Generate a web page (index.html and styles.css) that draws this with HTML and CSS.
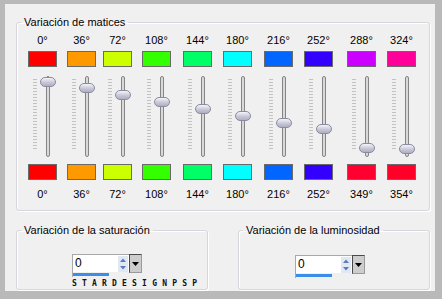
FILE: index.html
```html
<!DOCTYPE html>
<html lang="es">
<head>
  <meta charset="UTF-8" />
  <title>Variación de matices</title>
  <link rel="stylesheet" href="styles.css">
</head>
<body>
  <div class="panel">
    <fieldset class="group hue-group">
      <legend>Variación de matices</legend>
      <div class="hue-grid">
        <div class="hue-col">
          <div class="deg">0°</div>
          <div class="swatch" style="background:#ff0000"></div>
          <div class="slider"><div class="ticks"></div><div class="track"></div><div class="thumb" style="top:10px"></div></div>
          <div class="swatch" style="background:#ff0000"></div>
          <div class="deg deg-bottom">0°</div>
        </div>
        <div class="hue-col">
          <div class="deg">36°</div>
          <div class="swatch" style="background:#ff9900"></div>
          <div class="slider"><div class="ticks"></div><div class="track"></div><div class="thumb" style="top:16px"></div></div>
          <div class="swatch" style="background:#ff9900"></div>
          <div class="deg deg-bottom">36°</div>
        </div>
        <div class="hue-col">
          <div class="deg">72°</div>
          <div class="swatch" style="background:#ccff00"></div>
          <div class="slider"><div class="ticks"></div><div class="track"></div><div class="thumb" style="top:23px"></div></div>
          <div class="swatch" style="background:#ccff00"></div>
          <div class="deg deg-bottom">72°</div>
        </div>
        <div class="hue-col">
          <div class="deg">108°</div>
          <div class="swatch" style="background:#33ff00"></div>
          <div class="slider"><div class="ticks"></div><div class="track"></div><div class="thumb" style="top:30px"></div></div>
          <div class="swatch" style="background:#33ff00"></div>
          <div class="deg deg-bottom">108°</div>
        </div>
        <div class="hue-col">
          <div class="deg">144°</div>
          <div class="swatch" style="background:#00ff66"></div>
          <div class="slider"><div class="ticks"></div><div class="track"></div><div class="thumb" style="top:37px"></div></div>
          <div class="swatch" style="background:#00ff66"></div>
          <div class="deg deg-bottom">144°</div>
        </div>
        <div class="hue-col">
          <div class="deg">180°</div>
          <div class="swatch" style="background:#00ffff"></div>
          <div class="slider"><div class="ticks"></div><div class="track"></div><div class="thumb" style="top:44px"></div></div>
          <div class="swatch" style="background:#00ffff"></div>
          <div class="deg deg-bottom">180°</div>
        </div>
        <div class="hue-col">
          <div class="deg">216°</div>
          <div class="swatch" style="background:#0066ff"></div>
          <div class="slider"><div class="ticks"></div><div class="track"></div><div class="thumb" style="top:51px"></div></div>
          <div class="swatch" style="background:#0066ff"></div>
          <div class="deg deg-bottom">216°</div>
        </div>
        <div class="hue-col">
          <div class="deg">252°</div>
          <div class="swatch" style="background:#3300ff"></div>
          <div class="slider"><div class="ticks"></div><div class="track"></div><div class="thumb" style="top:57px"></div></div>
          <div class="swatch" style="background:#3300ff"></div>
          <div class="deg deg-bottom">252°</div>
        </div>
        <div class="hue-col">
          <div class="deg">288°</div>
          <div class="swatch" style="background:#cc00ff"></div>
          <div class="slider"><div class="ticks"></div><div class="track"></div><div class="thumb" style="top:76px"></div></div>
          <div class="swatch" style="background:#ff0030"></div>
          <div class="deg deg-bottom">349°</div>
        </div>
        <div class="hue-col">
          <div class="deg">324°</div>
          <div class="swatch" style="background:#ff0099"></div>
          <div class="slider"><div class="ticks"></div><div class="track"></div><div class="thumb" style="top:77px"></div></div>
          <div class="swatch" style="background:#ff0028"></div>
          <div class="deg deg-bottom">354°</div>
        </div>
      </div>
    </fieldset>

    <div class="lower-row">
      <fieldset class="group small-group">
        <legend>Variación de la saturación</legend>
        <div class="spin-wrap">
          <div class="spin">
            <div class="spin-box">
              <div class="spin-field">
                <span class="spin-value">0</span>
                <div class="spin-arrows">
                  <div class="arrow"><svg width="10" height="8" viewBox="0 0 10 8"><path d="M2 6 L5 2.5 L8 6 Z" fill="#5a7cc0"/></svg></div>
                  <div class="arrow"><svg width="10" height="8" viewBox="0 0 10 8"><path d="M2 2 L5 5.5 L8 2 Z" fill="#5a7cc0"/></svg></div>
                </div>
              </div>
              <div class="spin-bar"><div class="spin-bar-fill"></div></div>
            </div>
            <div class="drop-btn"><svg width="7" height="4" viewBox="0 0 7 4"><path d="M0 0 H7 L3.5 4 Z" fill="#000"/></svg></div>
          </div>
          <div class="watermark">STARDESIGNPSP</div>
        </div>
      </fieldset>

      <fieldset class="group small-group">
        <legend>Variación de la luminosidad</legend>
        <div class="spin-wrap lum-wrap">
          <div class="spin">
            <div class="spin-box">
              <div class="spin-field">
                <span class="spin-value">0</span>
                <div class="spin-arrows">
                  <div class="arrow"><svg width="10" height="8" viewBox="0 0 10 8"><path d="M2 6 L5 2.5 L8 6 Z" fill="#5a7cc0"/></svg></div>
                  <div class="arrow"><svg width="10" height="8" viewBox="0 0 10 8"><path d="M2 2 L5 5.5 L8 2 Z" fill="#5a7cc0"/></svg></div>
                </div>
              </div>
              <div class="spin-bar"><div class="spin-bar-fill"></div></div>
            </div>
            <div class="drop-btn"><svg width="7" height="4" viewBox="0 0 7 4"><path d="M0 0 H7 L3.5 4 Z" fill="#000"/></svg></div>
          </div>
        </div>
      </fieldset>
    </div>
  </div>
</body>
</html>
```

FILE: styles.css
```css
body {
  margin: 0;
  padding: 4px 7px 8px 5px;
  background: #b9b9b9;
  font-family: 'Liberation Sans', Arial, sans-serif;
  font-size: 11px;
  color: #000;
}

.panel {
  width: 430px;
  height: 287px;
  background: #f0f0f0;
  box-sizing: border-box;
  padding: 12px 5px 0 11px;
  overflow: hidden;
}

.group {
  margin: 0;
  padding: 0;
  border: 1px solid #d6d6dc;
  border-radius: 3px;
  box-shadow: inset 1px 1px 0 #fff, 1px 1px 0 #fff;
  min-width: 0;
}

.group legend {
  margin-left: 4px;
  padding: 0 3px;
  line-height: 13px;
  font-size: 11px;
  white-space: nowrap;
}

.hue-grid {
  display: grid;
  grid-template-columns: 39px 36px 39px 41px 40px 41px 40px 43px 40px 29px;
  padding: 5px 0 9px 11px;
}

.hue-col {
  display: flex;
  flex-direction: column;
  width: 29px;
}

.deg {
  line-height: 13px;
  height: 13px;
  text-align: center;
  white-space: nowrap;
  margin-bottom: 4px;
}

.deg-bottom {
  margin: 8px 0 0;
}

.swatch {
  width: 29px;
  height: 16px;
  box-sizing: border-box;
  border: 1px solid #6a6a6a;
}

.slider {
  position: relative;
  height: 97px;
}

.ticks {
  position: absolute;
  left: 5px;
  top: 12px;
  width: 4px;
  height: 72px;
  background: repeating-linear-gradient(to bottom, #c2c2c2 0 1px, transparent 1px 3px);
}

.track {
  position: absolute;
  left: 18px;
  top: 9px;
  width: 4px;
  height: 81px;
  box-sizing: border-box;
  border: 1px solid #858585;
  border-radius: 2px;
  background: #d9d9d9;
}

.thumb {
  position: absolute;
  left: 12px;
  width: 16px;
  height: 10px;
  box-sizing: border-box;
  border: 1px solid #8a8aa0;
  border-radius: 5px;
  background: linear-gradient(#f4f4fa, #c4c4d4 60%, #b0b0c4);
}

.lower-row {
  display: flex;
  gap: 30px;
  margin-top: 13px;
}

.small-group {
  width: 192px;
  height: 66px;
  box-sizing: border-box;
}

.spin-wrap {
  padding: 17px 0 0 55px;
}

.lum-wrap {
  padding: 18px 0 0 56px;
}

.spin {
  display: flex;
}

.spin-box {
  width: 57px;
  box-sizing: border-box;
  border-top: 1px solid #a8a8a8;
  border-left: 1px solid #a8a8a8;
  background: #f0f0f0;
}

.spin-field {
  display: flex;
  justify-content: space-between;
  background: #fff;
  height: 17px;
}

.spin-value {
  font-size: 12px;
  line-height: 17px;
  padding-left: 2px;
}

.spin-arrows {
  display: flex;
  flex-direction: column;
  margin: 1px 1px 0 0;
}

.arrow {
  width: 10px;
  height: 8px;
  background: #e2e8f2;
  display: flex;
}

.spin-bar {
  height: 4px;
  padding-top: 1px;
}

.spin-bar-fill {
  width: 36px;
  height: 3px;
  background: #3b8ee8;
}

.drop-btn {
  width: 13px;
  height: 19px;
  box-sizing: border-box;
  border: 1px solid #4a4a4a;
  border-right-color: #9a9a9a;
  border-bottom-color: #9a9a9a;
  background: #cdcdcd;
  display: flex;
  align-items: center;
  justify-content: center;
}

.watermark {
  margin-top: 3px;
  font-family: 'DejaVu Sans Mono', monospace;
  font-size: 8px;
  font-weight: bold;
  line-height: 8px;
  letter-spacing: 5.2px;
  color: #111;
}
```
